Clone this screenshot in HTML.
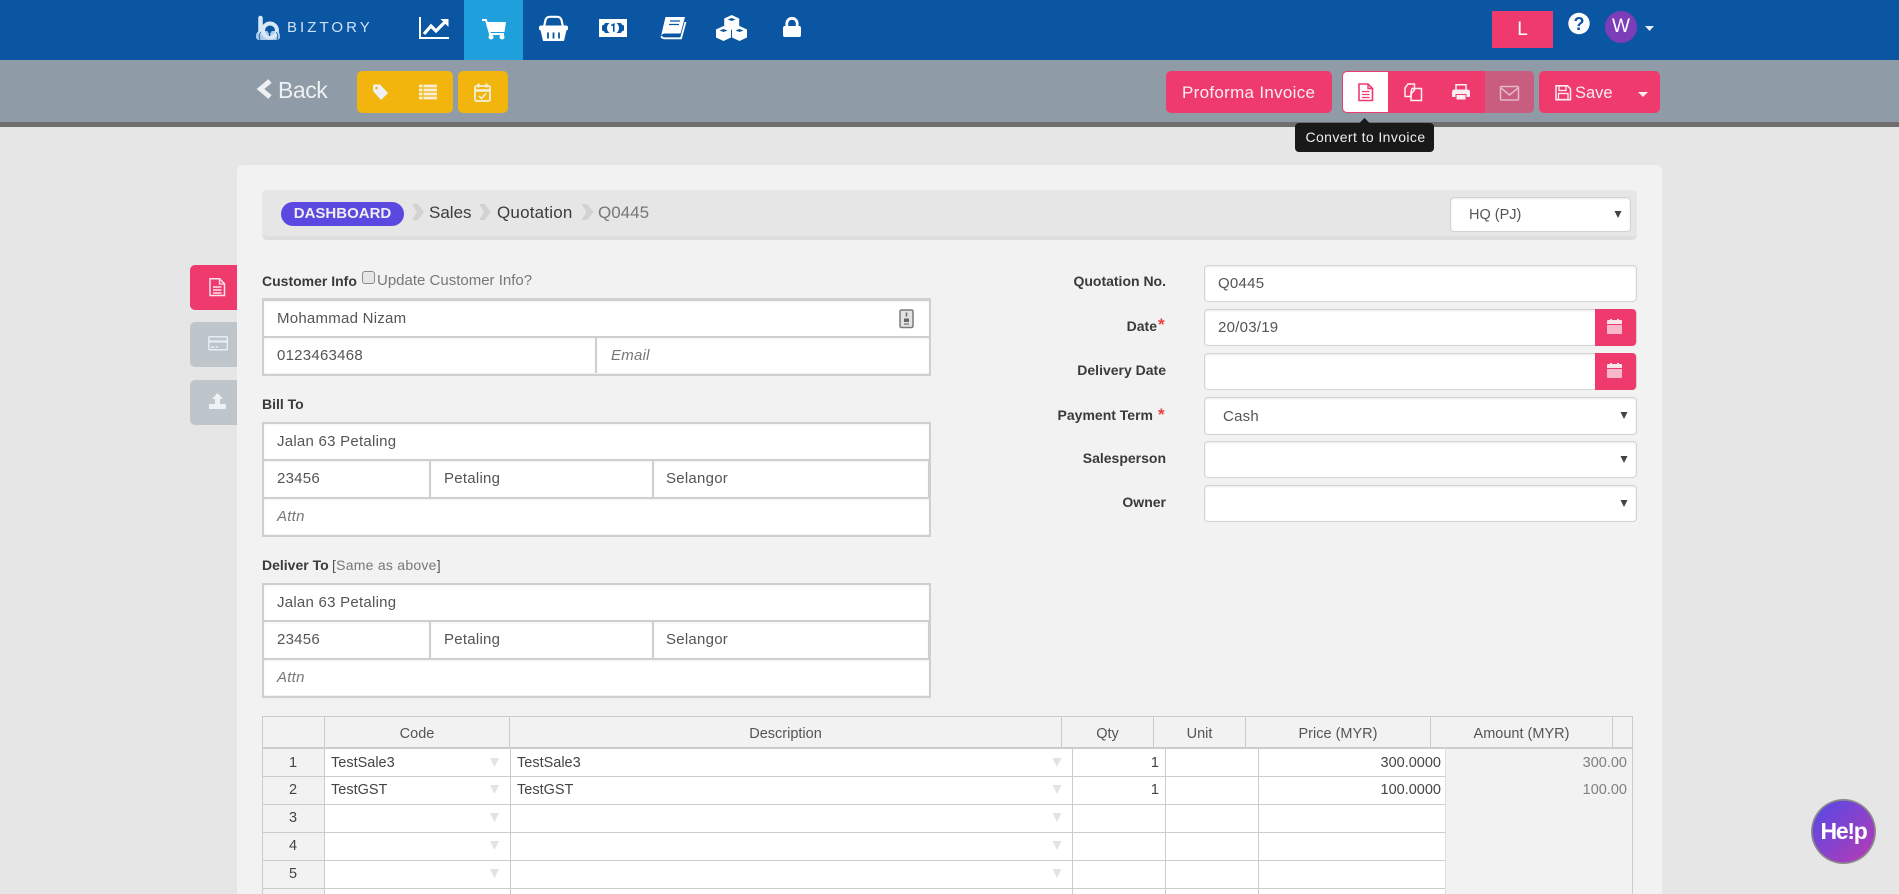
<!DOCTYPE html>
<html lang="en">
<head>
<meta charset="utf-8">
<title>Quotation Q0445</title>
<style>
*{box-sizing:border-box}
html,body{margin:0;padding:0;width:1899px;height:894px;overflow:hidden;background:#e6e6e6;font-family:"Liberation Sans",Arial,sans-serif;color:#555}
#p{position:relative;width:1899px;height:894px;overflow:hidden}
.b{position:absolute}
.t{position:absolute;white-space:nowrap;line-height:20px;height:20px}
.r{text-align:right}
.c{text-align:center}
.l{font-size:14px;font-weight:700;color:#3a3a3a}
.i{font-size:15px;letter-spacing:.25px;color:#555}
.em{font-style:italic;color:#777}
.inp{position:absolute;background:#fff;border:1px solid #d2d2d2;border-radius:4px;box-shadow:inset 0 1px 2px rgba(0,0,0,.08)}
.td{font-size:14.5px;color:#444}
.th{font-size:14.5px;color:#555}
.vl{position:absolute;width:1px;background:#ccc}
.hl{position:absolute;height:1px;background:#ccc}
.box{position:absolute;background:#cfcfcf}
.w{position:absolute;background:#fff;box-shadow:inset 0 1px 2px rgba(0,0,0,.05)}
</style>
</head>
<body>
<div id="p">
<div class="b" style="left:0;top:0;width:1899px;height:60px;background:#0a56a3"></div>
<div class="b" style="left:464px;top:0;width:59px;height:60px;background:#1f9fdb"></div>
<div class="b" style="left:0;top:60px;width:1899px;height:62px;background:#8f9ba6"></div>
<div class="b" style="left:0;top:122px;width:1899px;height:5px;background:#6f6f6f"></div>

<div class="t" style="left:287px;top:18px;font-size:15px;letter-spacing:3.05px;color:#cfe2f3">BIZTORY</div>
<div class="b" style="left:1492px;top:11px;width:61px;height:37px;background:#ef3a6d"></div>
<div class="t c" style="left:1492px;top:20px;width:61px;font-size:19px;color:#fff">L</div>
<div class="b" style="left:1605px;top:11px;width:32px;height:32px;border-radius:50%;background:#7d3cb8"></div>
<div class="t c" style="left:1605px;top:17px;width:32px;font-size:19px;color:#fff">W</div>

<div class="t" style="left:278px;top:80px;font-size:23px;letter-spacing:-.45px;line-height:20px;color:#eef1f3">Back</div>
<div class="b" style="left:357px;top:71px;width:96px;height:42px;background:#f2b50e;border-radius:5px"></div>
<div class="b" style="left:458px;top:71px;width:50px;height:42px;background:#f2b50e;border-radius:5px"></div>

<div class="b" style="left:1166px;top:71px;width:166px;height:42px;background:#ef3a6d;border-radius:5px"></div>
<div class="t" style="left:1182px;top:83px;font-size:17px;letter-spacing:.3px;color:#fbeef2">Proforma Invoice</div>
<div class="b" style="left:1342px;top:71px;width:143px;height:42px;background:#ef3a6d;border-radius:5px 0 0 5px"></div>
<div class="b" style="left:1343px;top:72px;width:45px;height:40px;background:#fff;border-radius:4px 0 0 4px"></div>
<div class="b" style="left:1485px;top:71px;width:49px;height:42px;background:#c95d80;border-radius:0 5px 5px 0"></div>
<div class="b" style="left:1539px;top:71px;width:121px;height:42px;background:#ef3a6d;border-radius:5px"></div>
<div class="t" style="left:1575px;top:83px;font-size:16.5px;color:#fbeef2">Save</div>

<div class="b" style="left:1295px;top:123px;width:139px;height:29px;background:#191919;border-radius:4px;z-index:3"></div>
<div class="t c" style="left:1296px;top:127px;width:139px;font-size:14px;letter-spacing:.4px;color:#eee;z-index:4">Convert to Invoice</div>

<div class="b" style="left:237px;top:165px;width:1425px;height:760px;background:#f2f2f2;border-radius:6px"></div>
<div class="b" style="left:190px;top:265px;width:47px;height:45px;background:#ef3a6d;border-radius:5px 0 0 5px"></div>
<div class="b" style="left:190px;top:322px;width:47px;height:45px;background:#bec5cb;border-radius:5px 0 0 5px"></div>
<div class="b" style="left:190px;top:380px;width:47px;height:45px;background:#bec5cb;border-radius:5px 0 0 5px"></div>

<div class="b" style="left:262px;top:190px;width:1375px;height:50px;background:#e6e6e6;border-bottom:4px solid #dedede;border-radius:5px"></div>
<div class="b" style="left:281px;top:202px;width:123px;height:24px;background:#5a48e0;border-radius:12px"></div>
<div class="t c" style="left:281px;top:204px;width:123px;font-size:15px;font-weight:700;color:#eee">DASHBOARD</div>
<div class="t" style="left:429px;top:203px;font-size:17px;color:#3c3c3c">Sales</div>
<div class="t" style="left:497px;top:203px;font-size:17px;letter-spacing:.2px;color:#3c3c3c">Quotation</div>
<div class="t" style="left:598px;top:203px;font-size:17px;color:#777">Q0445</div>

<div class="inp" style="left:1450px;top:197px;width:181px;height:35px"></div>
<div class="t" style="left:1469px;top:205px;font-size:14.5px;color:#555">HQ (PJ)</div>

<div class="t l" style="left:262px;top:271px">Customer Info</div>
<div class="b" style="left:362px;top:271px;width:13px;height:13px;background:#e6e6e6;border:1px solid #8a8a8a;border-radius:3px"></div>
<div class="t" style="left:377px;top:271px;font-size:15px;color:#777">Update Customer Info?</div>

<div class="box" style="left:262px;top:298px;width:669px;height:78px"></div>
<div class="w" style="left:264px;top:301px;width:665px;height:35px"></div>
<div class="w" style="left:264px;top:338px;width:331px;height:35px"></div>
<div class="w" style="left:597px;top:338px;width:332px;height:35px"></div>
<div class="b" style="left:264px;top:373px;width:665px;height:1px;background:#f2f2f2"></div>
<div class="t i" style="left:277px;top:309px">Mohammad Nizam</div>
<div class="t i" style="left:277px;top:346px">0123463468</div>
<div class="t i em" style="left:611px;top:346px">Email</div>

<div class="t l" style="left:262px;top:394px">Bill To</div>
<div class="box" style="left:262px;top:422px;width:669px;height:115px"></div>
<div class="w" style="left:264px;top:424px;width:665px;height:35px"></div>
<div class="w" style="left:264px;top:461px;width:165px;height:36px"></div>
<div class="w" style="left:431px;top:461px;width:221px;height:36px"></div>
<div class="w" style="left:654px;top:461px;width:274px;height:36px"></div>
<div class="w" style="left:264px;top:499px;width:665px;height:35px"></div>
<div class="b" style="left:264px;top:534px;width:665px;height:1px;background:#f2f2f2"></div>
<div class="t i" style="left:277px;top:432px">Jalan 63 Petaling</div>
<div class="t i" style="left:277px;top:469px">23456</div>
<div class="t i" style="left:444px;top:469px">Petaling</div>
<div class="t i" style="left:666px;top:469px">Selangor</div>
<div class="t i em" style="left:277px;top:507px">Attn</div>

<div class="t l" style="left:262px;top:555px">Deliver To</div>
<div class="t" style="left:332px;top:555px;font-size:14px;letter-spacing:.25px;color:#777"><span style="color:#555">[</span>Same as above<span style="color:#555">]</span></div>
<div class="box" style="left:262px;top:583px;width:669px;height:115px"></div>
<div class="w" style="left:264px;top:585px;width:665px;height:35px"></div>
<div class="w" style="left:264px;top:622px;width:165px;height:36px"></div>
<div class="w" style="left:431px;top:622px;width:221px;height:36px"></div>
<div class="w" style="left:654px;top:622px;width:274px;height:36px"></div>
<div class="w" style="left:264px;top:660px;width:665px;height:35px"></div>
<div class="b" style="left:264px;top:695px;width:665px;height:1px;background:#f2f2f2"></div>
<div class="t i" style="left:277px;top:593px">Jalan 63 Petaling</div>
<div class="t i" style="left:277px;top:630px">23456</div>
<div class="t i" style="left:444px;top:630px">Petaling</div>
<div class="t i" style="left:666px;top:630px">Selangor</div>
<div class="t i em" style="left:277px;top:668px">Attn</div>

<div class="t l r" style="left:966px;top:271px;width:200px">Quotation No.</div>
<div class="t l r" style="left:957px;top:316px;width:200px">Date</div>
<div class="t" style="left:1158px;top:315px;font-size:17px;font-weight:700;color:#e8413f">*</div>
<div class="t l r" style="left:966px;top:360px;width:200px">Delivery Date</div>
<div class="t l r" style="left:953px;top:405px;width:200px">Payment Term</div>
<div class="t" style="left:1158px;top:405px;font-size:17px;font-weight:700;color:#e8413f">*</div>
<div class="t l r" style="left:966px;top:448px;width:200px">Salesperson</div>
<div class="t l r" style="left:966px;top:492px;width:200px">Owner</div>

<div class="inp" style="left:1204px;top:265px;width:433px;height:37px"></div>
<div class="inp" style="left:1204px;top:309px;width:433px;height:37px"></div>
<div class="inp" style="left:1204px;top:353px;width:433px;height:37px"></div>
<div class="inp" style="left:1204px;top:397px;width:433px;height:38px"></div>
<div class="inp" style="left:1204px;top:441px;width:433px;height:37px"></div>
<div class="inp" style="left:1204px;top:485px;width:433px;height:37px"></div>
<div class="b" style="left:1595px;top:309px;width:41px;height:37px;background:#ef3a6d;border-radius:0 4px 4px 0"></div>
<div class="b" style="left:1595px;top:353px;width:41px;height:37px;background:#ef3a6d;border-radius:0 4px 4px 0"></div>
<div class="t i" style="left:1218px;top:274px">Q0445</div>
<div class="t i" style="left:1218px;top:318px">20/03/19</div>
<div class="t i" style="left:1223px;top:407px">Cash</div>

<div class="b" style="left:262px;top:716px;width:1371px;height:178px;border:1px solid #ccc;border-bottom:0"></div>
<div class="b" style="left:325px;top:749px;width:1120px;height:145px;background:#fff"></div>
<div class="hl" style="left:262px;top:747px;width:1371px;height:2px"></div>
<div class="hl" style="left:262px;top:776px;width:1183px"></div>
<div class="hl" style="left:262px;top:804px;width:1183px"></div>
<div class="hl" style="left:262px;top:832px;width:1183px"></div>
<div class="hl" style="left:262px;top:860px;width:1183px"></div>
<div class="hl" style="left:262px;top:888px;width:1183px"></div>
<div class="vl" style="left:324px;top:716px;height:32px"></div>
<div class="vl" style="left:509px;top:716px;height:32px"></div>
<div class="vl" style="left:1061px;top:716px;height:32px"></div>
<div class="vl" style="left:1153px;top:716px;height:32px"></div>
<div class="vl" style="left:1245px;top:716px;height:32px"></div>
<div class="vl" style="left:1430px;top:716px;height:32px"></div>
<div class="vl" style="left:1612px;top:716px;height:32px"></div>
<div class="vl" style="left:324px;top:748px;height:146px"></div>
<div class="vl" style="left:510px;top:748px;height:146px"></div>
<div class="vl" style="left:1072px;top:748px;height:146px"></div>
<div class="vl" style="left:1165px;top:748px;height:146px"></div>
<div class="vl" style="left:1258px;top:748px;height:146px"></div>
<div class="vl" style="left:1445px;top:748px;height:146px;background:#e0e0e0"></div>

<div class="t th c" style="left:325px;top:724px;width:184px">Code</div>
<div class="t th c" style="left:510px;top:724px;width:551px">Description</div>
<div class="t th c" style="left:1062px;top:724px;width:91px">Qty</div>
<div class="t th c" style="left:1154px;top:724px;width:91px">Unit</div>
<div class="t th c" style="left:1246px;top:724px;width:184px">Price (MYR)</div>
<div class="t th c" style="left:1431px;top:724px;width:181px">Amount (MYR)</div>

<div class="t td c" style="left:262px;top:753px;width:62px">1</div>
<div class="t td c" style="left:262px;top:780px;width:62px">2</div>
<div class="t td c" style="left:262px;top:808px;width:62px">3</div>
<div class="t td c" style="left:262px;top:836px;width:62px">4</div>
<div class="t td c" style="left:262px;top:864px;width:62px">5</div>
<div class="t td" style="left:331px;top:753px">TestSale3</div>
<div class="t td" style="left:517px;top:753px">TestSale3</div>
<div class="t td" style="left:331px;top:780px">TestGST</div>
<div class="t td" style="left:517px;top:780px">TestGST</div>
<div class="t td r" style="left:1059px;top:753px;width:100px">1</div>
<div class="t td r" style="left:1059px;top:780px;width:100px">1</div>
<div class="t td r" style="left:1341px;top:753px;width:100px">300.0000</div>
<div class="t td r" style="left:1341px;top:780px;width:100px">100.0000</div>
<div class="t td r" style="left:1527px;top:753px;width:100px;color:#808080">300.00</div>
<div class="t td r" style="left:1527px;top:780px;width:100px;color:#808080">100.00</div>

<svg class="b" style="left:0;top:0;z-index:2" width="1899" height="894" viewBox="0 0 1899 894" xmlns="http://www.w3.org/2000/svg">
<!-- logo -->
<path d="M256 36a4.500 4.500 0 0 1 4-5h16a4.500 4.500 0 0 1 4 5v1a3 3 0 0 1-3 3h-18a3 3 0 0 1-3-3z" fill="#a9cbe8"/>
<g fill="none" stroke="#d8e8f6">
<path d="M260.500 18V32" stroke-width="4.500" stroke-linecap="round"/>
<circle cx="270" cy="30.500" r="7" stroke-width="4"/>
</g>
<circle cx="269.500" cy="31" r="2" fill="#0a56a3"/>
<path d="M269.500 31V36" stroke="#0a56a3" stroke-width="1.400"/>
<path d="M260 40Q258 35 261 32M277 40Q279 35 276 32" fill="none" stroke="#0a56a3" stroke-width=".8"/>
<!-- chart -->
<path d="M420 17V38H449" fill="none" stroke="#fff" stroke-width="2"/>
<path d="M424 34L431 26L436 31L445 22" fill="none" stroke="#fff" stroke-width="3.200"/>
<path d="M440.500 19H448.500V27Z" fill="#fff"/>
<!-- cart -->
<path d="M482 20H486L490 34H504" fill="none" stroke="#fff" stroke-width="2"/>
<path d="M487 22H506L504.500 32H489.500Z" fill="#fff"/>
<circle cx="491" cy="37" r="2.500" fill="#fff"/><circle cx="502" cy="37" r="2.500" fill="#fff"/>
<!-- basket -->
<path d="M544 27L545.500 20Q546.500 16.800 550 16.800H557Q560.500 16.800 561.500 20L563 27" fill="none" stroke="#fff" stroke-width="2.200"/>
<rect x="539" y="25.500" width="29" height="5" rx="2" fill="#fff"/>
<path d="M540.500 30H566.500L564 41H543Z" fill="#fff"/>
<path d="M548 32.500V38.500M553.500 32.500V38.500M559 32.500V38.500" stroke="#0a56a3" stroke-width="1.800"/>
<!-- money -->
<rect x="599" y="19" width="28" height="18" fill="#fff"/>
<path d="M605 23H621Q621.500 25 624 25.500V30.500Q621.500 31 621 33H605Q604.500 31 602 30.500V25.500Q604.500 25 605 23Z" fill="#0a56a3"/>
<circle cx="613" cy="28" r="6" fill="#fff"/>
<path d="M611.300 25.500L613.800 24.300V31.700" fill="none" stroke="#0a56a3" stroke-width="1.600"/>
<!-- book -->
<path d="M665.500 17H685L680.500 33.500H665.500Q662 33.500 661 36Z" fill="#fff"/>
<path d="M661.500 36Q661.500 38.300 664.500 38.300H681L685.500 22" fill="none" stroke="#fff" stroke-width="1.800"/>
<path d="M670 21H680M669 24.500H679" stroke="#0a56a3" stroke-width="1.300"/>
<!-- cubes -->
<g transform="translate(731.700 22.500)"><path d="M0-7.500L7.500-4V4L0 7.500L-7.500 4V-4Z" fill="#fff"/><path d="M0-4.500L4-3L0-1.500L-4-3Z" fill="#0a56a3"/></g>
<g transform="translate(723.500 33.500)"><path d="M0-7.500L7.500-4V4L0 7.500L-7.500 4V-4Z" fill="#fff"/><path d="M0-4.500L4-3L0-1.500L-4-3Z" fill="#0a56a3"/></g>
<g transform="translate(739.500 33.500)"><path d="M0-7.500L7.500-4V4L0 7.500L-7.500 4V-4Z" fill="#fff"/><path d="M0-4.500L4-3L0-1.500L-4-3Z" fill="#0a56a3"/></g>
<!-- lock -->
<path d="M786.800 27V23.500a5.200 5.200 0 0 1 10.400 0V27" fill="none" stroke="#fff" stroke-width="2.800"/>
<rect x="783" y="26" width="18" height="11" rx="2" fill="#fff"/>
<!-- help circle -->
<circle cx="1579" cy="23.500" r="10.700" fill="#fff"/>
<text x="1579" y="30" text-anchor="middle" font-family="Liberation Sans,sans-serif" font-size="18" font-weight="700" fill="#0a56a3">?</text>
<path d="M1645 26H1654L1649.500 31Z" fill="#e8eef5"/>
<!-- back chevron -->
<path d="M270 81L260.500 89L270 97" fill="none" stroke="#eef1f3" stroke-width="5"/>
<!-- tag -->
<path d="M373 86.500Q373 84.500 375 84.500H380L388 93L381 100L373 91Z" fill="#eef1f3"/>
<circle cx="376.500" cy="88" r="1.300" fill="#f2b50e"/>
<!-- list -->
<path d="M419 86H437M419 90H437M419 94H437M419 98H437" stroke="#f6eed6" stroke-width="2.700"/>
<path d="M423 84V99.500" stroke="#f2b50e" stroke-width="1"/>
<!-- calendar check -->
<rect x="475" y="86" width="15" height="15" rx="1.500" fill="none" stroke="#f4efdd" stroke-width="1.800"/>
<path d="M475 90.500H490" stroke="#f4efdd" stroke-width="2.500"/>
<path d="M478.500 83.500V87.500M486.500 83.500V87.500" stroke="#f4efdd" stroke-width="2"/>
<path d="M479 96L481.500 98.500L486 93.500" fill="none" stroke="#f4efdd" stroke-width="1.600"/>
<!-- doc -->
<path d="M1359 84H1368L1372.500 88.500V100.500H1359Z" fill="none" stroke="#ef3a6d" stroke-width="1.600"/>
<path d="M1368 84V88.500H1372.500" fill="none" stroke="#ef3a6d" stroke-width="1.400"/>
<path d="M1362 91.500H1369.500M1362 94.500H1369.500M1362 97.500H1369.500" stroke="#ef3a6d" stroke-width="1.300"/>
<!-- copy -->
<path d="M1408 84H1414.500V90L1411 94V96.500H1405V88Z" fill="none" stroke="#fbeef2" stroke-width="1.500"/>
<path d="M1412 88.500H1421.500V100.500H1411V92Z" fill="none" stroke="#fbeef2" stroke-width="1.500"/>
<!-- print -->
<path d="M1456 90V84.700H1466V90" fill="none" stroke="#fbeef2" stroke-width="1.500"/>
<path d="M1452 92Q1452 89.500 1455 89.500H1467Q1470 89.500 1470 92V97H1452Z" fill="#fbeef2"/>
<rect x="1456" y="94.500" width="10" height="5.500" fill="#fbeef2" stroke="#ef3a6d"/>
<!-- envelope -->
<rect x="1500.500" y="86.500" width="18" height="13.500" rx="1" fill="none" stroke="#e6b7c7" stroke-width="1.500"/>
<path d="M1501 88L1509.500 95L1518 88" fill="none" stroke="#e6b7c7" stroke-width="1.500"/>
<!-- save -->
<path d="M1556 85.800H1567.500L1570.500 88.800V99.800H1556Z" fill="none" stroke="#fbeef2" stroke-width="1.500"/>
<rect x="1559" y="86" width="7" height="4.500" fill="none" stroke="#fbeef2" stroke-width="1.300"/>
<rect x="1558.500" y="93.500" width="9.500" height="6" fill="none" stroke="#fbeef2" stroke-width="1.300"/>
<path d="M1638 92H1648L1643 97Z" fill="#fbeef2"/>
<!-- tooltip arrow -->
<path d="M1359.500 123L1364.500 118L1369.500 123Z" fill="#191919"/>
<!-- breadcrumb chevrons -->
<g fill="#d2d2d2">
<path d="M412 204H417.500L424 212L417.500 220H412L417 212Z"/>
<path d="M479 204H484.500L491 212L484.500 220H479L484 212Z"/>
<path d="M581.500 204H587L593.500 212L587 220H581.500L586.500 212Z"/>
</g>
<!-- tab icons -->
<path d="M210 278.800H219.500L224.500 283.800V295.500H210Z" fill="none" stroke="#fbe3ea" stroke-width="1.500"/>
<path d="M219.500 279V284H224.500" fill="none" stroke="#fbe3ea" stroke-width="1.300"/>
<path d="M213 287H221.500M213 290H221.500M213 293H221.500" stroke="#fbe3ea" stroke-width="1.500"/>
<rect x="208.800" y="336.800" width="18.500" height="13" rx="1" fill="none" stroke="#e4eef4" stroke-width="1.500"/>
<path d="M209 341.500H227" stroke="#e4eef4" stroke-width="2.200"/>
<path d="M211 347H214M215.500 347H218" stroke="#e4eef4" stroke-width="1.500"/>
<path d="M217.500 393L223 399H220V404H215V399H212Z" fill="#eef2f5"/>
<rect x="209" y="404" width="17" height="5" rx=".8" fill="#eef2f5"/>
<!-- contact -->
<rect x="900" y="310" width="13" height="17.500" rx="1.500" fill="#e2e2e2" stroke="#7a7a7a" stroke-width="1.500"/>
<path d="M906.500 312.500V316.500" stroke="#666" stroke-width="1.500"/>
<rect x="904" y="318.500" width="5" height="3.500" fill="#666"/>
<rect x="904" y="323.300" width="5" height="1.500" fill="#888"/>
<!-- calendars -->
<g fill="#fbe3ea">
<path d="M1607 321a1 1 0 0 1 1-1h13a1 1 0 0 1 1 1v3h-15zM1610 319h2v3h-2zM1617 319h2v3h-2z"/>
<path d="M1607 325h15v8a1 1 0 0 1-1 1h-13a1 1 0 0 1-1-1z" opacity=".75"/>
<path d="M1607 365a1 1 0 0 1 1-1h13a1 1 0 0 1 1 1v3h-15zM1610 363h2v3h-2zM1617 363h2v3h-2z"/>
<path d="M1607 369h15v8a1 1 0 0 1-1 1h-13a1 1 0 0 1-1-1z" opacity=".75"/>
</g>
<!-- select arrows -->
<g fill="#444">
<path d="M1614.500 211H1621.500L1618 218Z"/>
<path d="M1620.500 412H1627.500L1624 419Z"/>
<path d="M1620.500 456H1627.500L1624 463Z"/>
<path d="M1620.500 500H1627.500L1624 507Z"/>
</g>
<!-- table arrows -->
<g fill="#e3e3e3">
<path d="M490 758H499L494.500 767Z"/><path d="M490 785H499L494.500 794Z"/><path d="M490 813H499L494.500 822Z"/><path d="M490 841H499L494.500 850Z"/><path d="M490 869H499L494.500 878Z"/>
<path d="M1052.500 758H1061.500L1057 767Z"/><path d="M1052.500 785H1061.500L1057 794Z"/><path d="M1052.500 813H1061.500L1057 822Z"/><path d="M1052.500 841H1061.500L1057 850Z"/><path d="M1052.500 869H1061.500L1057 878Z"/>
</g>
<!-- help bubble -->
<defs><linearGradient id="hg" x1="0" y1="0" x2="1" y2="1"><stop offset=".1" stop-color="#5c48e2"/><stop offset="1" stop-color="#b93bb3"/></linearGradient></defs>
<circle cx="1843.500" cy="831.500" r="32.500" fill="#8a8a8a"/>
<circle cx="1843.500" cy="831.500" r="30.800" fill="url(#hg)"/>
<text x="1843.500" y="839" text-anchor="middle" font-family="Liberation Sans,sans-serif" font-size="23" font-weight="700" letter-spacing="-1.300" fill="#fff">He!p</text>
</svg>
</div>
</body>
</html>
